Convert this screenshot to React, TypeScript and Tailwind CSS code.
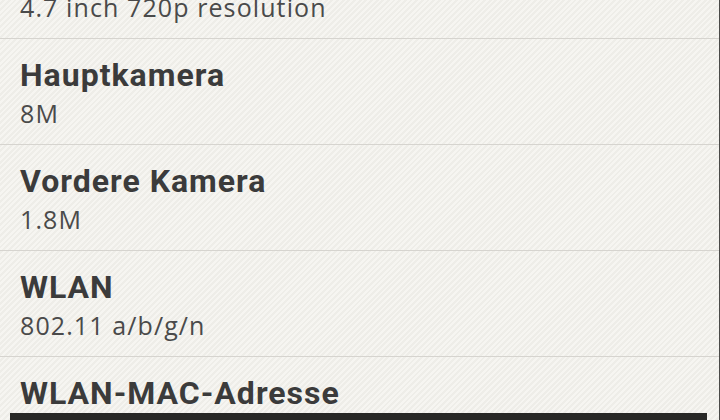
type Spec = {
  label: string;
  value?: string;
};

const specs: Spec[] = [
  { label: "Display", value: "4.7 inch 720p resolution" },
  { label: "Hauptkamera", value: "8M" },
  { label: "Vordere Kamera", value: "1.8M" },
  { label: "WLAN", value: "802.11 a/b/g/n" },
  { label: "WLAN-MAC-Adresse", value: "00:00:00:00:00:00" },
];

const SpecRow = ({ label, value }: Spec) => (
  <div className="h-[106px] shrink-0 border-b border-[#d6d4cf] pl-5 pt-[18px]">
    <div className="font-['Roboto',sans-serif] text-[32px] leading-[36px] font-bold tracking-[1px] text-[#3b3b3b]">
      {label}
    </div>
    {value && (
      <div className="font-['Open_Sans',sans-serif] text-[25px] leading-[40px] tracking-[1.1px] text-[#4a4a4a]">
        {value}
      </div>
    )}
  </div>
);

export default function App() {
  return (
    <div className="flex h-[420px] w-[720px] flex-col overflow-hidden border-r border-[#4a4a48] bg-[#f4f3ef] bg-[repeating-linear-gradient(135deg,#f6f5f1_0px,#f6f5f1_2px,#eeede8_2px,#eeede8_4px)]">
      <div className="min-h-0 flex-1 overflow-hidden">
        <div className="-mt-[67px] flex flex-col">
          {specs.map((s) => (
            <SpecRow key={s.label} {...s} />
          ))}
        </div>
      </div>
      <div className="ml-[10px] mr-[12px] h-[7px] shrink-0 bg-[#282826]" />
    </div>
  );
}
